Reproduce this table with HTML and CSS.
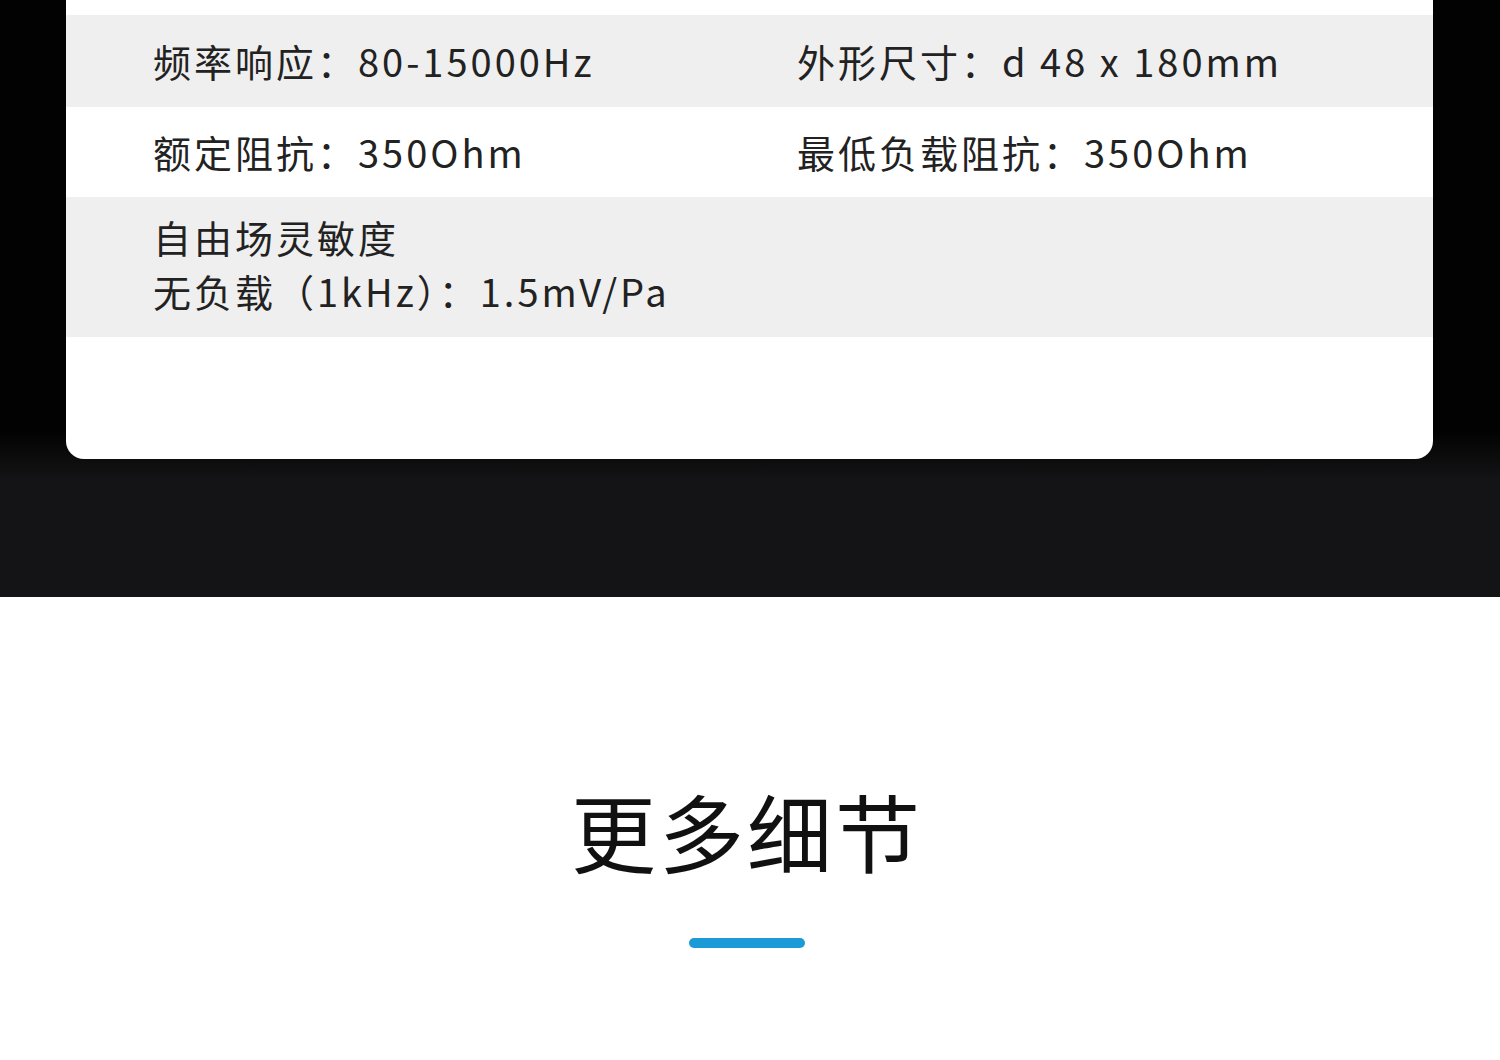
FILE: index.html
```html
<!DOCTYPE html>
<html lang="zh-CN">
<head>
    <meta charset="UTF-8">
    <title>更多细节</title>
    <link rel="stylesheet" href="styles.css">
</head>
<body>

<!-- 参数卡片 -->
<section class="spec-section">
    <div class="spec-card">
        <div class="spec-row top-cut"></div>
        <div class="spec-row gray">
            <div class="spec-cell">频率响应：80-15000Hz</div>
            <div class="spec-cell">外形尺寸：d 48 x 180mm</div>
        </div>
        <div class="spec-row">
            <div class="spec-cell">额定阻抗：350Ohm</div>
            <div class="spec-cell">最低负载阻抗：350Ohm</div>
        </div>
        <div class="spec-row gray tall">
            <div class="spec-cell">自由场灵敏度<br>无负载（1kHz）：1.5mV/Pa</div>
            <div class="spec-cell"></div>
        </div>
    </div>
</section>

<!-- 更多细节 -->
<section class="detail-section">
    <h2 class="detail-title">更多细节</h2>
    <div class="detail-bar"></div>
</section>

</body>
</html>
```

FILE: styles.css
```css
* {
    box-sizing: border-box;
}

body {
    margin: 0;
    background-color: #fff;
    font-family: "Noto Sans CJK SC", "Noto Sans", sans-serif;
    color: #222;
}

.spec-section {
    height: 597px;
    background: linear-gradient(#020202 0, #020202 430px, #141416 480px, #141416 100%);
    padding: 0 67px 0 66px;
}
.spec-card {
    background-color: #fff;
    height: 459px;
    border-radius: 0 0 18px 18px;
    overflow: hidden;
}
.spec-row {
    display: grid;
    grid-template-columns: 644px 1fr;
    height: 90px;
    align-items: center;
    padding-left: 87px;
}
.spec-row.top-cut {
    height: 15px;
}
.spec-row.gray {
    background-color: #efefef;
    height: 92px;
}
.spec-row.tall {
    height: 140px;
}
.spec-cell {
    font-size: 38px;
    letter-spacing: 3px;
    line-height: 54px;
    color: #222;
}
.spec-row.tall .spec-cell {
    margin-top: -6px;
}

.detail-section {
    height: 463px;
    display: flex;
    flex-direction: column;
    align-items: center;
    padding: 175px 6px 0 0;
}
.detail-title {
    margin: 0;
    font-size: 85px;
    font-weight: 400;
    letter-spacing: 3px;
    line-height: 116px;
    color: #111;
}
.detail-bar {
    margin-top: 50px;
    width: 116px;
    height: 10px;
    border-radius: 5px;
    background-color: #1a9bd7;
}
```
